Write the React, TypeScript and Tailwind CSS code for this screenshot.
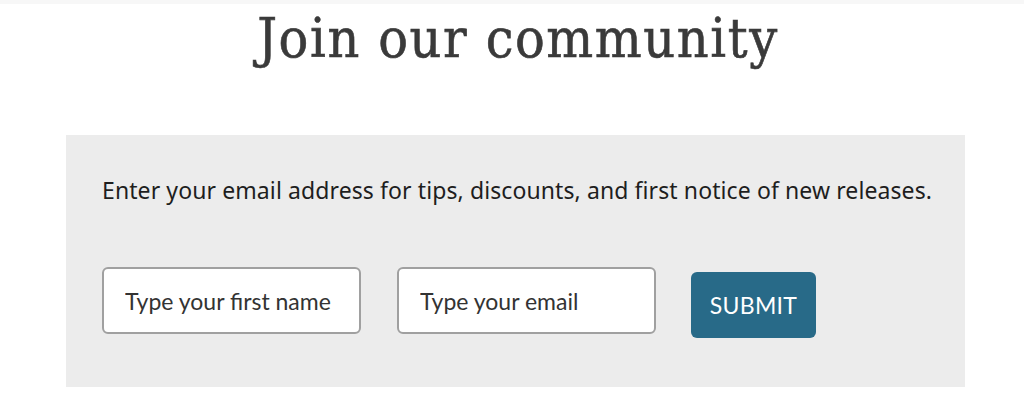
export default function App() {
  return (
    <div className="w-[1024px] h-[418px] bg-white overflow-hidden">
      <div className="h-[4px] bg-[#f7f7f7]" />
      <h1 className="text-center pl-[12px] text-[55px] leading-[72px] text-[#3a3a3a] -mt-[2px] tracking-[1.6px] [-webkit-text-stroke:0.6px_#3a3a3a]" style={{ fontFamily: '"DejaVu Serif Condensed", "DejaVu Serif", serif', fontStretch: 'condensed' }}>
        Join our community
      </h1>
      <div className="ml-[66px] mt-[61px] w-[899px] h-[252px] bg-[#ececec] pl-[36px] pr-[20px] pt-[40px]">
        <p className="text-[23px] leading-[30px] text-[#1e1e1e] tracking-[0.1px] whitespace-nowrap" style={{ fontFamily: '"Noto Sans", sans-serif' }}>
          Enter your email address for tips, discounts, and first notice of new releases.
        </p>
        <div className="flex items-start mt-[62px]" style={{ fontFamily: '"Lato", sans-serif' }}>
          <input
            className="w-[259px] h-[67px] bg-white border-2 border-[#a0a0a0] rounded-[6px] px-[21px] text-[23px] text-[#333] placeholder:text-[#333] outline-none"
            placeholder="Type your first name"
          />
          <input
            className="ml-[36px] w-[259px] h-[67px] bg-white border-2 border-[#a0a0a0] rounded-[6px] px-[21px] text-[23px] text-[#333] placeholder:text-[#333] outline-none"
            placeholder="Type your email"
          />
          <button className="ml-[35px] mt-[5px] w-[125px] h-[66px] bg-[#286a88] rounded-[6px] text-white text-[23px] tracking-[0.3px]">
            SUBMIT
          </button>
        </div>
      </div>
    </div>
  );
}
